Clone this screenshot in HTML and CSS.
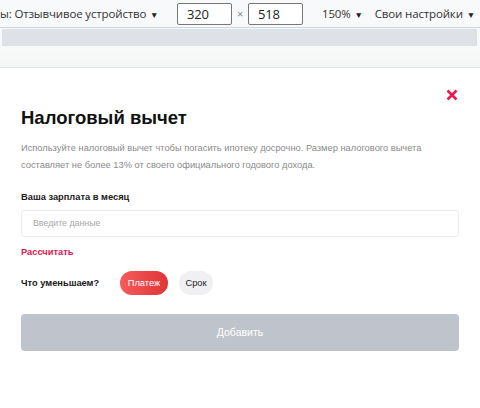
FILE: index.html
```html
<!DOCTYPE html>
<html lang="ru">
<head>
<meta charset="utf-8">
<link rel="stylesheet" href="styles.css">
</head>
<body>
<div class="toolbar">
  <span class="device">ы: Отзывчивое устройство <span class="caret">▼</span></span>
  <span class="dims">
    <span class="dim-input">320</span>
    <span class="times">×</span>
    <span class="dim-input">518</span>
  </span>
  <span class="zoom">150% <span class="caret">▼</span></span>
  <span class="custom">Свои настройки <span class="caret">▼</span></span>
</div>
<div class="ruler-wrap"><div class="ruler"></div></div>
<div class="strip"></div>
<main class="modal">
  <div class="close-row">
    <svg class="close" width="12" height="12" viewBox="0 0 12 12"><path d="M1.5 1.5L10.5 10.5M10.5 1.5L1.5 10.5" stroke="#e8194b" stroke-width="2.6" stroke-linecap="butt"/></svg>
  </div>
  <h1 class="title">Налоговый вычет</h1>
  <p class="desc">Используйте налоговый вычет чтобы погасить ипотеку досрочно. Размер налогового вычета составляет не более 13% от своего официального годового дохода.</p>
  <label class="label">Ваша зарплата в месяц</label>
  <div class="input">Введите данные</div>
  <div class="calc">Рассчитать</div>
  <div class="choice">
    <span class="choice-label">Что уменьшаем?</span>
    <span class="pill pill-active">Платеж</span>
    <span class="pill">Срок</span>
  </div>
  <div class="submit">Добавить</div>
</main>
</body>
</html>
```
FILE: styles.css
```css
* { box-sizing: border-box; }
html, body { margin: 0; padding: 0; background: #fff; }
body { width: 480px; height: 408px; overflow: hidden; font-family: "Liberation Sans", Arial, sans-serif; }

.toolbar {
  height: 28px;
  background: #f8f9fa;
  border-bottom: 1px solid #cfd2d6;
  display: flex;
  align-items: center;
  font-family: "Open Sans", "Noto Sans", sans-serif;
  font-size: 11.5px;
  letter-spacing: -0.15px;
  color: #333;
  white-space: nowrap;
  overflow: hidden;
}
.toolbar > span { flex: none; }
.caret { font-size: 8.5px; margin-left: 1px; color: #222; }
.device { width: 177px; }
.dims { display: flex; align-items: center; }
.dim-input {
  width: 55px; height: 22px;
  border: 1px solid #767676;
  border-radius: 2px;
  background: #fff;
  padding-left: 9px;
  font-size: 13px;
  line-height: 20px;
  color: #222;
}
.times { width: 16px; text-align: center; color: #888; font-size: 11px; }
.zoom { margin-left: 19px; }
.custom { margin-left: 12px; }

.ruler-wrap { padding: 1px 3px 0 2px; background: #f8f9fa; }
.ruler { height: 17px; background: #dee1e6; }
.strip {
  height: 22px;
  background: linear-gradient(#f8f9f9, #f4f5f5);
  border-bottom: 1px solid #e2e3e4;
}

.modal { padding: 0 21px; }
.close-row { display: flex; justify-content: flex-end; padding-top: 21px; }
.close { display: block; margin-right: 1px; }
.title {
  margin: 5px 0 0;
  font-size: 18.5px;
  font-weight: 700;
  color: #111;
  line-height: 24px;
}
.desc {
  margin: 10px 0 0;
  font-size: 9.3px;
  line-height: 17px;
  color: #8a8a8a;
}
.label {
  display: block;
  margin-top: 16px;
  font-size: 9.3px;
  font-weight: 700;
  color: #1a1a1a;
  line-height: 14px;
}
.input {
  margin-top: 6px;
  height: 27px;
  border: 1px solid #ececec;
  border-radius: 3px;
  padding-left: 11px;
  font-size: 8.8px;
  line-height: 25px;
  color: #a8a8a8;
}
.calc {
  margin-top: 8px;
  font-size: 9.3px;
  font-weight: 700;
  color: #e0174c;
  line-height: 14px;
}
.choice {
  margin-top: 12px;
  display: flex;
  align-items: center;
  height: 24px;
}
.choice-label { font-size: 9.3px; font-weight: 700; color: #1a1a1a; width: 99px; }
.pill {
  height: 24px;
  width: 34px;
  border-radius: 12px;
  background: #f0f0f2;
  font-size: 9.3px;
  line-height: 24px;
  text-align: center;
  color: #222;
  margin-right: 11px;
}
.pill-active {
  background: linear-gradient(90deg, #f65b5b, #e03438);
  color: #fff;
  width: 48px;
}
.submit {
  margin-top: 19px;
  height: 37px;
  border-radius: 4px;
  background: #bfc4cc;
  color: #fff;
  font-size: 10.5px;
  line-height: 37px;
  text-align: center;
}
```
